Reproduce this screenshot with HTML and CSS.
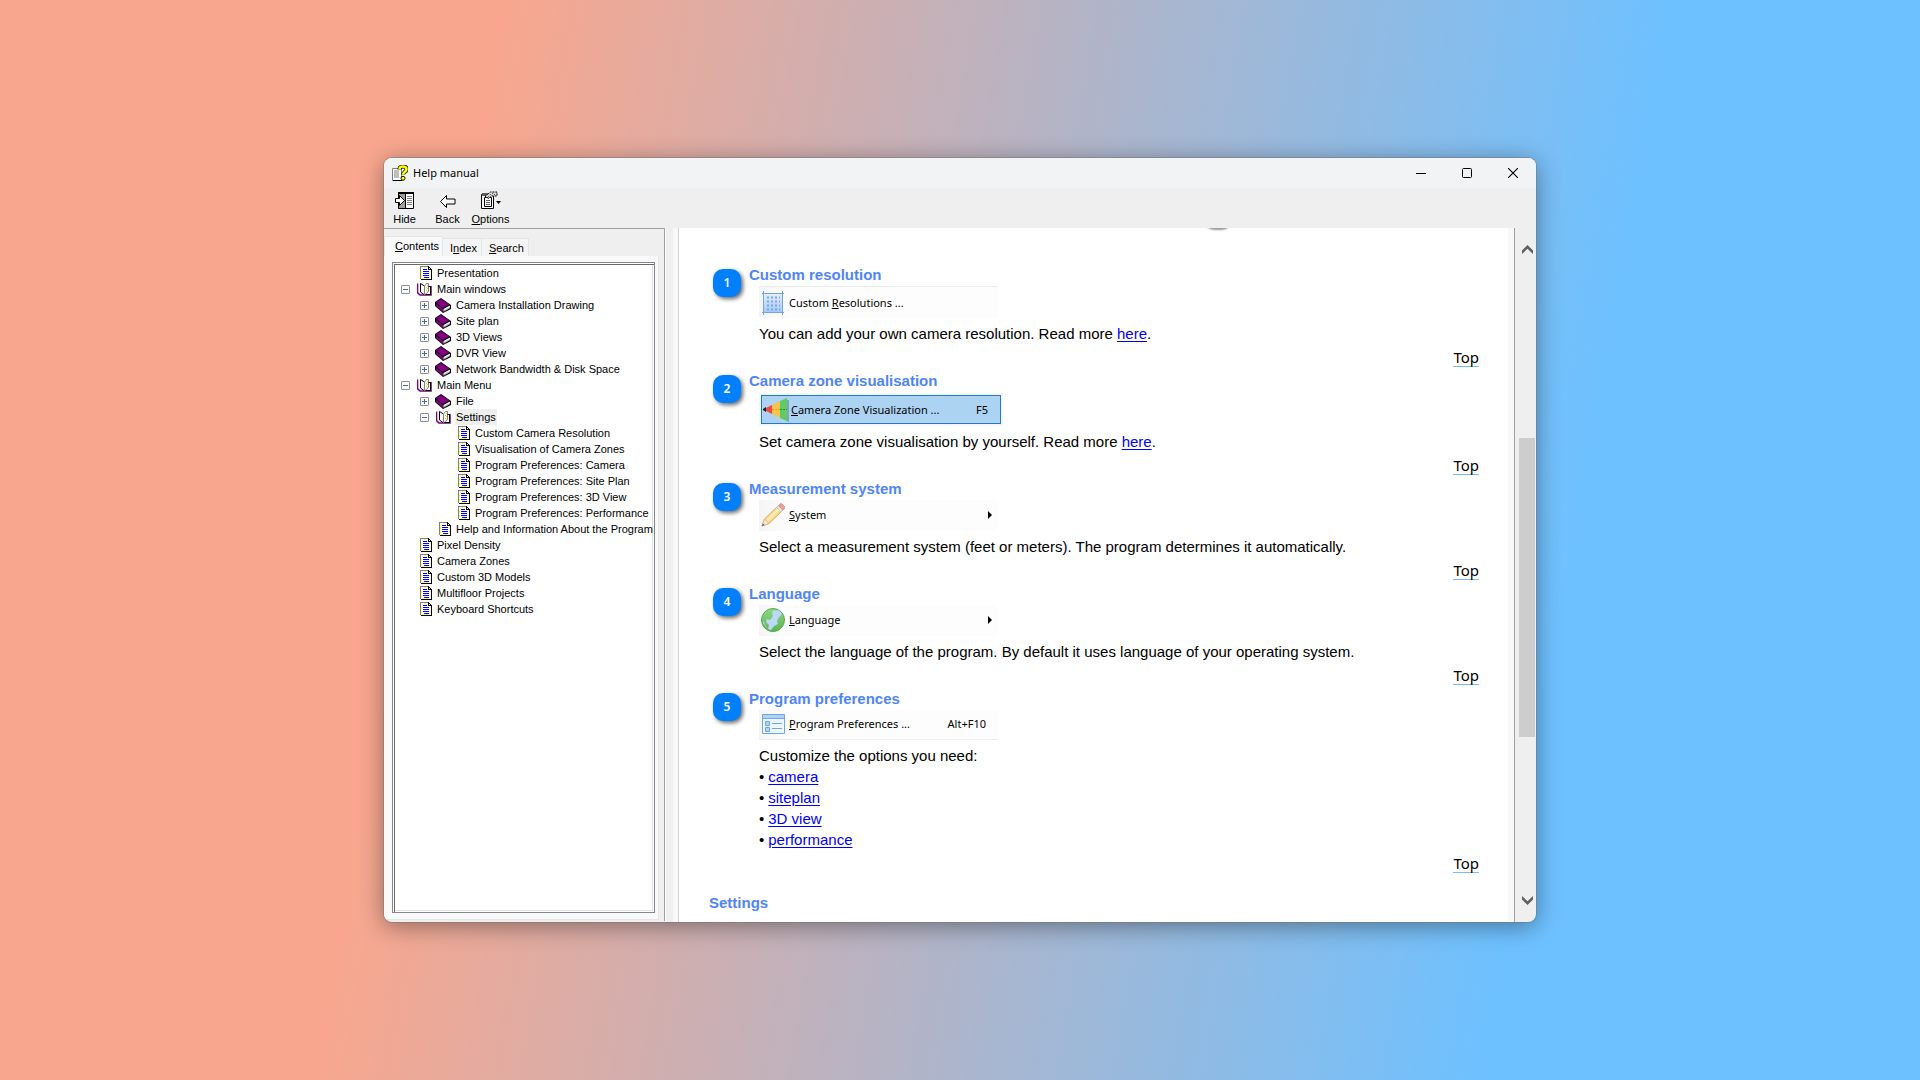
FILE: index.html
```html
<!DOCTYPE html>
<html lang="en">
<head>
<meta charset="utf-8">
<title>Help manual</title>
<link rel="stylesheet" href="styles.css">
</head>
<body>
<svg class="defs" aria-hidden="true">
  <symbol id="i-page" viewBox="0 0 12 14">
    <path d="M0 0h9l3 3v11H0z" fill="#fff"/>
    <path d="M2 2h1v1H2zM6 2h1v1H6zM1 5h1v2H1zM10 5h1v1h-1zM1 9h1v2H1zM10 9h1v2h-1zM2 12h2v1H2zM6 12h2v1H6zM4 1h1v1H4zM8 3h1v1H8z" fill="#ff0"/>
    <path d="M0 0h9v1H1v12H0z" fill="#808080"/>
    <path d="M8 0h1v1h1v1h1v1h1v11H1v-1h10V4H8z" fill="#000"/>
    <path d="M9 2h1v1H9z" fill="#fff"/>
    <path d="M3 3h4v1H3zM3 5h6v1H3zM3 7h6v1H3zM3 9h6v1H3zM4 11h5v1H4z" fill="#00f"/>
  </symbol>
  <symbol id="i-book" viewBox="0 0 16 15">
    <path d="M6 0 16 7v4l-8 4-8-7V4z" fill="#000"/>
    <path d="M6 1 14.500 6.500 8 10 1 4.500z" fill="#800080"/>
    <path d="M1 5.500 8 11v3L1 8z" fill="#800080"/>
    <path d="M8.500 11 15 7.500V10l-6.500 3.800z" fill="#fff"/>
    <path d="M9 12.800 15 9.500" stroke="#808080" stroke-width=".8"/>
  </symbol>
  <symbol id="i-open" viewBox="0 0 15 14">
    <path d="M.5 1.500v9l2.500 2.500h11V4" fill="none" stroke="#800080" stroke-width="1.600"/>
    <path d="M3.500 1.500 7.500 4v9l-4-3z" fill="#fff" stroke="#000"/>
    <path d="M7.500 4 9.500 1.500h2v8l-4 3.500z" fill="#fff" stroke="#808080"/>
    <path d="M9 5h1v1H9zM10 3h1v1h-1zM9 8h1v1H9zM10 6h1v1h-1zM10 9h1v1h-1z" fill="#e8d800"/>
    <path d="M11.500 4.500h2v8h-5" fill="none" stroke="#000"/>
  </symbol>
</svg>

<main class="window">
  <header class="titlebar">
    <svg class="app-icon" width="16" height="16" viewBox="0 0 16 16">
      <path d="M.5 3.500h9v12h-9z" fill="#fff" stroke="#808080"/>
      <path d="M2 6h5M2 8h5M2 10h5M2 12h5" stroke="#808080"/>
      <path d="M1 15.500h9V11" fill="none" stroke="#000"/>
      <path d="M7.500 4.500C7.500 1.500 9 1.500 11 1.500c2.500 0 3.500 1 3.500 2.800 0 2.700-3.500 2.700-3.500 5.200" fill="none" stroke="#000" stroke-width="4"/>
      <path d="M7.500 4.500C7.500 1.500 9 1.500 11 1.500c2.500 0 3.500 1 3.500 2.800 0 2.700-3.500 2.700-3.500 5.200" fill="none" stroke="#ff0" stroke-width="2.600"/>
      <circle cx="11" cy="13.300" r="2" fill="#ff0" stroke="#000" stroke-width=".9"/>
    </svg>
    <h1 class="title">Help manual</h1>
    <div class="caption">
      <button type="button" aria-label="Minimize"><svg width="10" height="10"><path d="M0 5.500h10" stroke="#000"/></svg></button>
      <button type="button" aria-label="Maximize"><svg width="10" height="10"><rect x=".5" y=".5" width="9" height="9" rx="1" fill="none" stroke="#000"/></svg></button>
      <button type="button" aria-label="Close"><svg width="10" height="10"><path d="m0 0 10 10M10 0 0 10" stroke="#000" stroke-width="1.100"/></svg></button>
    </div>
  </header>

  <nav class="toolbar" aria-label="Toolbar">
    <button type="button" class="tool">
      <svg width="20" height="20" viewBox="0 0 20 20">
        <path d="M3 1h16v17H3z" fill="#fff"/>
        <path d="M3 1h7v17H3z" fill="#a0a0a0"/>
        <path d="M3 1h16v2H3z" fill="#000"/>
        <path d="M3.500 1.500h15v16h-15zM10.500 2v15" fill="none" stroke="#000"/>
        <path d="M12 5.500h5M12 7.500h5M12 9.500h5M12 11.500h5M12 13.500h5" stroke="#808080"/>
        <path d="M.5 7.500h4v-3l5 5-5 5v-3h-4z" fill="#fff" stroke="#000"/>
      </svg>
      <span>Hide</span>
    </button>
    <button type="button" class="tool">
      <svg width="20" height="20" viewBox="0 0 20 20"><path d="M2.500 10.500l6-6v3.500h8.500v5H8.500v3.500z" fill="#fff" stroke="#000"/></svg>
      <span>Back</span>
    </button>
    <button type="button" class="tool">
      <svg width="22" height="20" viewBox="0 0 22 20">
        <path d="M1.500 3.500h12v14h-12z" fill="#fff" stroke="#000"/>
        <path d="M2 2h11v3H2z" fill="#606060"/>
        <path d="M4.500 6.500h7v9h-7z" fill="#fff" stroke="#000"/>
        <path d="M6 9.500h4M6 11.500h4M6 13.500h4" stroke="#606060"/>
        <path d="M5 5.500 10.500 1H17v4h-6l-2 2.500z" fill="#d8d8d8" stroke="#000" stroke-dasharray="2 1"/>
        <path d="M8 5h1v1H8zM10 3h1v1h-1zM12 2h1v1h-1zM14 3h1v1h-1zM12 4h1v1h-1z" fill="#606060"/>
        <path d="M16 10h5l-2.500 3z" fill="#000"/>
      </svg>
      <span><u>O</u>ptions</span>
    </button>
  </nav>

  <div class="panes">
    <aside class="sidebar">
      <div class="tabs" role="tablist">
        <button type="button" class="tab active" role="tab" aria-selected="true"><u>C</u>ontents</button>
        <button type="button" class="tab" role="tab">I<u>n</u>dex</button>
        <button type="button" class="tab" role="tab"><u>S</u>earch</button>
      </div>
      <div class="tab-panel" role="tabpanel">
        <ul class="tree">
          <li class="row l0"><i class="box none"></i><svg class="page"><use href="#i-page"/></svg><span>Presentation</span></li>
          <li class="row l0"><i class="box"></i><svg class="open"><use href="#i-open"/></svg><span>Main windows</span></li>
          <li class="row l1"><i class="box plus"></i><svg class="book"><use href="#i-book"/></svg><span>Camera Installation Drawing</span></li>
          <li class="row l1"><i class="box plus"></i><svg class="book"><use href="#i-book"/></svg><span>Site plan</span></li>
          <li class="row l1"><i class="box plus"></i><svg class="book"><use href="#i-book"/></svg><span>3D Views</span></li>
          <li class="row l1"><i class="box plus"></i><svg class="book"><use href="#i-book"/></svg><span>DVR View</span></li>
          <li class="row l1"><i class="box plus"></i><svg class="book"><use href="#i-book"/></svg><span>Network Bandwidth &amp; Disk Space</span></li>
          <li class="row l0"><i class="box"></i><svg class="open"><use href="#i-open"/></svg><span>Main Menu</span></li>
          <li class="row l1"><i class="box plus"></i><svg class="book"><use href="#i-book"/></svg><span>File</span></li>
          <li class="row l1"><i class="box"></i><svg class="open"><use href="#i-open"/></svg><span class="selected">Settings</span></li>
          <li class="row l2"><i class="box none"></i><svg class="page"><use href="#i-page"/></svg><span>Custom Camera Resolution</span></li>
          <li class="row l2"><i class="box none"></i><svg class="page"><use href="#i-page"/></svg><span>Visualisation of Camera Zones</span></li>
          <li class="row l2"><i class="box none"></i><svg class="page"><use href="#i-page"/></svg><span>Program Preferences: Camera</span></li>
          <li class="row l2"><i class="box none"></i><svg class="page"><use href="#i-page"/></svg><span>Program Preferences: Site Plan</span></li>
          <li class="row l2"><i class="box none"></i><svg class="page"><use href="#i-page"/></svg><span>Program Preferences: 3D View</span></li>
          <li class="row l2"><i class="box none"></i><svg class="page"><use href="#i-page"/></svg><span>Program Preferences: Performance</span></li>
          <li class="row l1"><i class="box none"></i><svg class="page"><use href="#i-page"/></svg><span>Help and Information About the Program</span></li>
          <li class="row l0"><i class="box none"></i><svg class="page"><use href="#i-page"/></svg><span>Pixel Density</span></li>
          <li class="row l0"><i class="box none"></i><svg class="page"><use href="#i-page"/></svg><span>Camera Zones</span></li>
          <li class="row l0"><i class="box none"></i><svg class="page"><use href="#i-page"/></svg><span>Custom 3D Models</span></li>
          <li class="row l0"><i class="box none"></i><svg class="page"><use href="#i-page"/></svg><span>Multifloor Projects</span></li>
          <li class="row l0"><i class="box none"></i><svg class="page"><use href="#i-page"/></svg><span>Keyboard Shortcuts</span></li>
        </ul>
      </div>
    </aside>
    <div class="splitter"></div>

    <div class="document">
      <article class="page-body">
        <span class="marker-above"></span>

        <section class="topic">
          <span class="badge">1</span>
          <h2>Custom resolution</h2>
          <div class="menu line-top">
            <svg width="24" height="24" viewBox="0 0 24 24">
              <defs><linearGradient id="g1" x2="0" y2="1"><stop stop-color="#e4eefb"/><stop offset="1" stop-color="#a9c8f5"/></linearGradient></defs>
              <path d="M3 3h18v18H3z" fill="url(#g1)"/>
              <path d="M1 2.500h22M1 21.500h22M2.500 0v24M21.500 0v24" stroke="#6ea6ea"/>
              <path d="M6 6.500h13M6 10.500h13M6 14.500h13M6 18.500h13" stroke="#7aa6ea" stroke-width="2" stroke-dasharray="2 2"/>
            </svg>
            <span class="label">Custom <u>R</u>esolutions ...</span>
          </div>
          <p>You can add your own camera resolution. Read more <a href="#resolution">here</a>.</p>
          <a class="top" href="#top">Top</a>
        </section>

        <section class="topic">
          <span class="badge">2</span>
          <h2>Camera zone visualisation</h2>
          <div class="menu highlight">
            <svg width="26" height="26" viewBox="0 0 26 26">
              <polygon points="24,3 26,3 26,25 22,23 24,23" fill="#7f9fc4"/>
              <polygon points="17,4 24,1 24,24 17,21" fill="#5fcb62"/>
              <polygon points="9,8 17,4 17,21 9,17" fill="#f2c550"/>
              <polygon points="3,11 9,8 9,17 3,14" fill="#f24848"/>
              <polygon points="0,12 3,10 3,15 0,13" fill="#202020"/>
              <path d="M9 12.500h8" stroke="#f0a000" stroke-dasharray="2 1"/>
              <path d="M17 12.500h7" stroke="#109a10" stroke-dasharray="2 1"/>
            </svg>
            <span class="label"><u>C</u>amera Zone Visualization ...</span>
            <span class="key">F5</span>
          </div>
          <p>Set camera zone visualisation by yourself. Read more <a href="#zones">here</a>.</p>
          <a class="top" href="#top">Top</a>
        </section>

        <section class="topic">
          <span class="badge">3</span>
          <h2>Measurement system</h2>
          <div class="menu">
            <svg width="24" height="24" viewBox="0 0 24 24">
              <path d="M1 23 3.500 16 17 3l4.500 4.500L8 20.500z" fill="#fbdc8c" stroke="#d9a95c"/>
              <path d="M6 18 19 5" stroke="#fff0bf" stroke-width="2"/>
              <path d="M1 23 3.500 16 8 20.500z" fill="#fbe9d2" stroke="#d9b98c"/>
              <path d="M1 23 1.800 20.500 3.500 22z" fill="#555"/>
              <path d="M15.500 4.500 17.500 2.500 22 7l-2 2z" fill="#d8e4f0" stroke="#a9bccf" stroke-width=".6"/>
              <path d="M17.500 2.500 19 1q1-.8 2 0l2.500 2.500q.8 1 0 2L22 7z" fill="#f59a94" stroke="#e0706a" stroke-width=".6"/>
            </svg>
            <span class="label"><u>S</u>ystem</span>
            <svg class="arrow" width="4" height="8"><path d="M0 0 4 4 0 8z"/></svg>
          </div>
          <p>Select a measurement system (feet or meters). The program determines it automatically.</p>
          <a class="top" href="#top">Top</a>
        </section>

        <section class="topic">
          <span class="badge">4</span>
          <h2>Language</h2>
          <div class="menu">
            <svg width="24" height="24" viewBox="0 0 24 24">
              <defs><linearGradient id="g2" x2="0" y2="1"><stop stop-color="#8fd884"/><stop offset="1" stop-color="#5cb356"/></linearGradient></defs>
              <circle cx="12" cy="12" r="11.500" fill="url(#g2)" stroke="#58a850"/>
              <path d="M12 2.500 18 2.500 21 6 18 9 16 13 17 16 13 18 10 22 7 21 8 17 5 14 6 11 9 12 12 8 11 5z" fill="#bcd9fb"/>
              <path d="M2.500 13 4 17 7 21 5 19 2 15z" fill="#bcd9fb"/>
            </svg>
            <span class="label"><u>L</u>anguage</span>
            <svg class="arrow" width="4" height="8"><path d="M0 0 4 4 0 8z"/></svg>
          </div>
          <p>Select the language of the program. By default it uses language of your operating system.</p>
          <a class="top" href="#top">Top</a>
        </section>

        <section class="topic">
          <span class="badge">5</span>
          <h2>Program preferences</h2>
          <div class="menu line-bottom">
            <svg width="24" height="24" viewBox="0 0 24 24">
              <path d="M1.500 2.500h22v19h-22z" fill="#eef5fd" stroke="#6ea6ea"/>
              <path d="M2 3h21v3H2z" fill="#b4d2f7"/>
              <path d="M2 6.500h21M11 11.500h10M11 16.500h10" stroke="#6ea6ea"/>
              <path d="M4.500 9.500h4v4h-4zM4.500 15.500h4v4h-4z" fill="#b4d2f7" stroke="#6ea6ea"/>
            </svg>
            <span class="label"><u>P</u>rogram Preferences ...</span>
            <span class="key">Alt+F10</span>
          </div>
          <p>Customize the options you need:</p>
          <ul class="links">
            <li><a href="#camera">camera</a></li>
            <li><a href="#siteplan">siteplan</a></li>
            <li><a href="#view3d">3D view</a></li>
            <li><a href="#performance">performance</a></li>
          </ul>
          <a class="top" href="#top">Top</a>
        </section>

        <h2 class="next">Settings</h2>
      </article>
    </div>

    <div class="scrollbar" aria-hidden="true">
      <svg width="11" height="9"><path d="M0 9V5.500L5.500 0 11 5.500V9L5.500 3.800z" fill="#606060"/></svg>
      <div class="track"><div class="thumb"></div></div>
      <svg width="11" height="9"><path d="M0 0v3.500L5.500 9 11 3.500V0L5.500 5.200z" fill="#606060"/></svg>
    </div>
  </div>
</main>
</body>
</html>
```
FILE: styles.css
```css
* { box-sizing: border-box; }

html { height: 100%; }

body {
  margin: 0;
  min-height: 100%;
  display: grid;
  place-items: center;
  background: linear-gradient(100deg, #f8a78e 24%, #6ec1ff 79%);
  font-family: "Liberation Sans", Arial, sans-serif;
  color: #000;
}

button {
  font: inherit;
  color: inherit;
  background: none;
  border: 0;
  padding: 0;
}

ul { list-style: none; margin: 0; padding: 0; }

.defs { position: absolute; width: 0; height: 0; }

.window {
  width: 60%;
  display: flex;
  flex-direction: column;
  background: #efefef;
  border-radius: 8px;
  overflow: hidden;
  box-shadow: 0 0 0 1px rgba(120, 120, 120, .5), 0 4px 24px rgba(0, 0, 0, .4);
}

/* Title bar */
.titlebar {
  display: flex;
  align-items: center;
  height: 30px;
  padding-left: 8px;
  background: #f1f3f5;
}

.title {
  flex: 1;
  margin: 0 0 0 5px;
  font: 400 11px/16px "Noto Sans", sans-serif;
}

.caption { display: flex; }

.caption button {
  width: 46px;
  height: 28px;
  display: grid;
  place-items: center;
}

/* Toolbar */
.toolbar {
  display: flex;
  gap: 2px;
  height: 40px;
  padding-top: 3px;
}

.tool {
  width: 41px;
  display: flex;
  flex-direction: column;
  align-items: center;
  gap: 1px;
  font-size: 11px;
  line-height: 14px;
}

/* Panes */
.panes { display: flex; }

.sidebar {
  flex: none;
  width: 280px;
  display: flex;
  flex-direction: column;
  padding: 7px 5px 2px 0;
  border-top: 1px solid #a0a0a0;
}

.tabs {
  display: flex;
  align-items: flex-end;
}

.tab {
  height: 18px;
  padding: 0 4px 0 7px;
  border: 1px solid #e5e5e5;
  border-bottom: 0;
  background: #f4f4f4;
  font-size: 11px;
  line-height: 18px;
}

.tab + .tab { border-left: 0; }

.tab.active {
  height: 20px;
  padding: 0 3px 2px 10px;
  background: #f9f9f9;
}

.tab-panel {
  flex: 1;
  display: flex;
  padding: 6px 3px 6px 8px;
  background: #f9f9f9;
  border: solid #e5e5e5;
  border-width: 0 1px 1px 0;
}

.tree {
  flex: 1;
  min-width: 0;
  padding: 2px 1px 1px 8px;
  background: #fff;
  border: 1px solid #828790;
  box-shadow: inset 1px 1px #fff, inset 2px 2px #696969, inset -1px -1px #fff, inset -2px -2px #e3e3e3;
  font-size: 11px;
  line-height: 16px;
}

.row {
  display: flex;
  align-items: center;
  height: 16px;
  white-space: nowrap;
}

.row.l1 { padding-left: 19px; }
.row.l2 { padding-left: 38px; }
.row span { padding: 0 1px; }
.row .selected { background: #efefef; }

.row svg { flex: none; height: 14px; }
.row .page { width: 12px; margin: 0 4px 0 10px; }
.row .open { width: 15px; margin: 0 4px 0 7px; }
.row .book { width: 16px; height: 15px; margin: 0 4px 0 6px; }

.box {
  flex: none;
  width: 9px;
  height: 9px;
  border: 1px solid #919191;
  border-radius: 1px;
  background: linear-gradient(#4b63a7, #4b63a7) center / 5px 1px no-repeat #fbfbfb;
}

.box.plus {
  background:
    linear-gradient(#4b63a7, #4b63a7) center / 5px 1px no-repeat,
    linear-gradient(#4b63a7, #4b63a7) center / 1px 5px no-repeat #fbfbfb;
}

.box.none { visibility: hidden; }

.splitter {
  flex: none;
  width: 9px;
  margin-bottom: 1px;
  border-left: 1px solid #a0a0a0;
  box-shadow: inset 1px 0 #fff;
}

/* Document */
.document {
  flex: 1;
  min-width: 0;
  padding: 0 6px 0 5px;
  background: #f8f8f8;
  border-right: 1px solid #a0a0a0;
}

.page-body {
  position: relative;
  overflow: hidden;
  padding: 38px 29px 10px 34px;
  background: #fff;
  border-left: 1px solid #d4d4d4;
  font-size: 15px;
  line-height: 20px;
}

.marker-above {
  position: absolute;
  top: -28px;
  left: 524px;
  width: 28px;
  height: 28px;
  border-radius: 10px;
  box-shadow: 1px 2px 2px rgba(0, 0, 0, .4);
}

.topic {
  position: relative;
  display: flex;
  flex-direction: column;
  margin-bottom: 5px;
  padding-left: 46px;
}

.badge {
  position: absolute;
  top: 3px;
  left: 0;
  width: 28px;
  height: 28px;
  border-radius: 10px;
  background: #0080ff;
  box-shadow: 2px 2px 4px rgba(0, 0, 0, .6);
  color: #fff;
  font: 600 12px/28px "Noto Sans", sans-serif;
  text-align: center;
}

h2 {
  margin: 0 0 2px -10px;
  font-size: 15px;
  line-height: 18px;
  color: #4f85f7;
}

h2.next { margin: 21px 0 0 -4px; }

.menu {
  width: 239px;
  height: 31px;
  display: flex;
  align-items: center;
  gap: 4px;
  padding: 0 12px 1px 2px;
  background: linear-gradient(90deg, #f5f5f5, #fdfdfd 30px);
  font: 11px/16px "Noto Sans", sans-serif;
}

.menu svg { flex: none; }
.menu .label { flex: 1; }

.menu.line-top {
  height: 32px;
  padding-bottom: 0;
  border-top: 1px solid #ededed;
}

.menu.line-bottom {
  height: 30px;
  border-bottom: 1px solid #ededed;
}

.menu .arrow { margin-right: -6px; }

.menu.highlight {
  width: 240px;
  height: 29px;
  gap: 2px;
  margin: 3px 2px 2px;
  padding-left: 1px;
  padding-bottom: 0;
  background: #add3f3;
  border: 1px solid #1a7ad4;
  outline: 2px solid #f7f7f7;
}

p { margin: 6px 0 0; }

a { color: #00f; }

.page-body p a,
.links a { text-underline-offset: 2px; }

.top {
  align-self: flex-end;
  height: 20px;
  margin-top: 3px;
  border-bottom: 1px solid #7db9f5;
  color: #000;
  font-family: "Noto Sans", sans-serif;
  text-decoration: none;
}

.links li { height: 21px; line-height: 22px; }
.links li::before { content: "•"; margin-right: 4px; }

/* Scroll bar */
.scrollbar {
  flex: none;
  width: 21px;
  display: flex;
  flex-direction: column;
  align-items: center;
  gap: 10px;
  padding: 17px 1px 17px 4px;
}

.track {
  flex: 1;
  align-self: stretch;
  display: grid;
  grid-template-rows: 28% 48% 1fr;
}

.thumb {
  grid-row: 2;
  background: #cdcdcd;
}
```
